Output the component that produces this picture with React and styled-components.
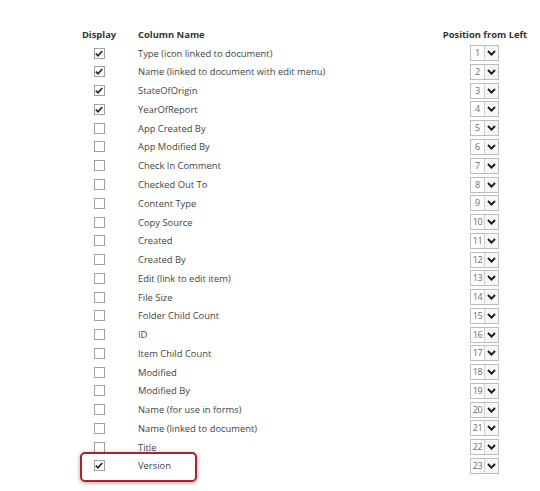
import React from 'react';
import styled, { createGlobalStyle } from 'styled-components';

const columns = [
    { name: 'Type (icon linked to document)', checked: true },
    { name: 'Name (linked to document with edit menu)', checked: true },
    { name: 'StateOfOrigin', checked: true },
    { name: 'YearOfReport', checked: true },
    { name: 'App Created By' },
    { name: 'App Modified By' },
    { name: 'Check In Comment' },
    { name: 'Checked Out To' },
    { name: 'Content Type' },
    { name: 'Copy Source' },
    { name: 'Created' },
    { name: 'Created By' },
    { name: 'Edit (link to edit item)' },
    { name: 'File Size' },
    { name: 'Folder Child Count' },
    { name: 'ID' },
    { name: 'Item Child Count' },
    { name: 'Modified' },
    { name: 'Modified By' },
    { name: 'Name (for use in forms)' },
    { name: 'Name (linked to document)' },
    { name: 'Title' },
    { name: 'Version', checked: true, highlight: true },
]

const GlobalStyle = createGlobalStyle`
    body {
        margin: 0;
        background: #fff;
        font-family: "Open Sans", "Liberation Sans", sans-serif;
    }
`

const CheckBox = ({ checked }) => (
    <Box>
        {checked && (
            <svg width="8" height="7" viewBox="0 0 8 7">
                <path d="M0.8 3.6 L3 5.8 L7.2 0.9" fill="none" stroke="#222" strokeWidth="1.6" />
            </svg>
        )}
    </Box>
)

const PositionSelect = ({ value }) => (
    <Select>
        <SelectValue>{value}</SelectValue>
        <SelectArrow>
            <svg width="9" height="6" viewBox="0 0 9 6">
                <path d="M1 1 L4.5 4.6 L8 1" fill="none" stroke="#1a1a1a" strokeWidth="1.9" />
            </svg>
        </SelectArrow>
    </Select>
)

const App = () => {
    return (
        <>
            <GlobalStyle />
            <Table>
                <HeaderRow>
                    <HeadCell align="center">Display</HeadCell>
                    <HeadCell>Column Name</HeadCell>
                    <HeadCell align="center">Position from Left</HeadCell>
                </HeaderRow>
                {columns.map((col, i) => (
                    <Row key={col.name} highlight={col.highlight}>
                        <Cell align="center"><CheckBox checked={col.checked} /></Cell>
                        <Cell>{col.name}</Cell>
                        <Cell align="center"><PositionSelect value={i + 1} /></Cell>
                    </Row>
                ))}
            </Table>
        </>
    )
}

const Table = styled.div`
    box-sizing: border-box;
    min-height: 491px;
    padding: 25px 0 0 80px;
    width: 540px;
`

const gridCols = `
    display: grid;
    grid-template-columns: 38px 280px 94px;
    column-gap: 20px;
    height: 18.77px;
    align-items: center;
`

const HeaderRow = styled.div`
    ${gridCols}
`

const HeadCell = styled.div`
    font-size: 9.4px;
    font-weight: 700;
    color: #333;
    white-space: nowrap;
    text-align: ${({ align }) => align || 'left'};
`

const Row = styled.div`
    ${gridCols}
    position: relative;

    &::after {
        content: '';
        display: ${({ highlight }) => (highlight ? 'block' : 'none')};
        position: absolute;
        left: 0;
        top: -5px;
        width: 117px;
        height: 30px;
        box-sizing: border-box;
        border: 2px solid #a8232c;
        border-radius: 5px;
        box-shadow: 0 1px 4px rgba(120, 20, 20, 0.45);
    }
`

const Cell = styled.div`
    font-size: 9.4px;
    color: #444;
    white-space: nowrap;
    display: flex;
    align-items: center;
    justify-content: ${({ align }) => (align === 'center' ? 'center' : 'flex-start')};
`

const Box = styled.div`
    width: 11px;
    height: 11px;
    box-sizing: border-box;
    border: 1px solid #a0a0a0;
    background: #fff;
    display: flex;
    align-items: center;
    justify-content: center;
`

const Select = styled.div`
    display: flex;
    height: 16px;
    width: 29px;
    box-sizing: border-box;
    border: 1px solid #bdbdbd;
    margin-left: -2px;
`

const SelectValue = styled.div`
    flex: 1;
    font-size: 9px;
    letter-spacing: -0.3px;
    color: #6a6a6a;
    padding-left: 1px;
    line-height: 14px;
`

const SelectArrow = styled.div`
    width: 13px;
    border-left: 1px solid #cfcfcf;
    background: #f6f6f6;
    display: flex;
    align-items: center;
    justify-content: center;
`

export default App;
